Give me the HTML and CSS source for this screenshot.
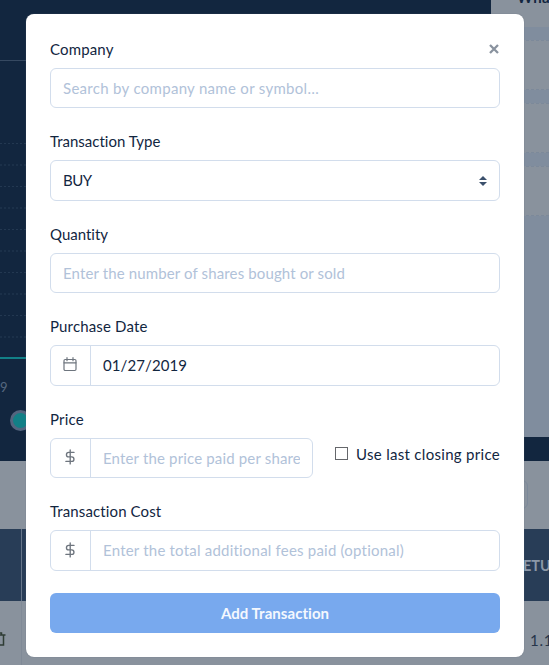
FILE: index.html
```html
<!DOCTYPE html>
<html lang="en">
<head>
<meta charset="utf-8">
<title>Add Transaction</title>
<link rel="stylesheet" href="styles.css">
</head>
<body>
<div class="page">
  <div class="top">
    <div class="chart">
      <div class="chart-head"></div>
      <div class="plot"></div>
      <div class="tick">9</div>
      <div class="dot"></div>
    </div>
    <div class="side">
      <div class="side-title">What</div>
      <div class="card"></div>
      <div class="card"></div>
      <div class="card"></div>
    </div>
  </div>
  <div class="toolbar"><div class="search"></div></div>
  <div class="thead"><div class="cell-first"></div><div class="th">ETUR</div></div>
  <div class="row">
    <div class="cell-first">
      <svg class="trash" width="14" height="16" viewBox="0 0 14 16" fill="none" stroke="#2f3d35" stroke-width="1.5"><path d="M1 4h12.5M5 4V2h4.5v2M3 4v10h8.5V4"/></svg>
    </div>
    <div class="td">1.1</div>
  </div>
</div>

<form class="modal">
  <svg class="close" width="10" height="10" viewBox="0 0 10 10" stroke="#89929e" stroke-width="2.3"><path d="M1 1l8 8M9 1L1 9"/></svg>
  <div class="group">
    <div class="label"><span class="t-company">Company</span></div>
    <div class="input hint"><span class="t-search">Search by company name or symbol…</span></div>
  </div>
  <div class="group">
    <div class="label"><span class="t-type">Transaction Type</span></div>
    <div class="input select"><span class="t-buy">BUY</span>
      <svg width="8" height="10" viewBox="0 0 8 10" fill="#3b506c"><path d="M0 4L4 0l4 4zM0 6h8l-4 4z"/></svg>
    </div>
  </div>
  <div class="group">
    <div class="label"><span>Quantity</span></div>
    <div class="input hint"><span class="t-number">Enter the number of shares bought or sold</span></div>
  </div>
  <div class="group">
    <div class="label"><span class="t-date">Purchase Date</span></div>
    <div class="input addon"><div class="icon">
      <svg width="15" height="15" viewBox="0 0 15 15" fill="none" stroke="#6e757e" stroke-width="1.2" stroke-linecap="round"><rect x="1" y="2.5" width="12" height="11" rx="1.2"/><path d="M1 5.8h12M4 .7v3M10 .7v3"/></svg>
    </div><div class="value"><span class="t-day">01/27/2019</span></div></div>
  </div>
  <div class="group price-row">
    <div class="price">
      <div class="label"><span class="t-price">Price</span></div>
      <div class="input addon hint"><div class="icon">
        <svg width="11" height="16" viewBox="0 0 11 16" fill="none" stroke="#6e757e" stroke-width="1.35" stroke-linecap="round"><path d="M5.2.9v14M9 3.4H3.7a2.2 2.2 0 0 0 0 4.5h3a2.2 2.2 0 0 1 0 4.5H.9"/></svg>
      </div><div class="value"><span class="t-paid">Enter the price paid per share</span></div></div>
    </div>
    <div class="check"><span class="box"></span><span class="t-closing">Use last closing price</span></div>
  </div>
  <div class="group">
    <div class="label"><span class="t-cost">Transaction Cost</span></div>
    <div class="input addon hint"><div class="icon">
      <svg width="11" height="16" viewBox="0 0 11 16" fill="none" stroke="#6e757e" stroke-width="1.35" stroke-linecap="round"><path d="M5.2.9v14M9 3.4H3.7a2.2 2.2 0 0 0 0 4.5h3a2.2 2.2 0 0 1 0 4.5H.9"/></svg>
    </div><div class="value"><span class="t-fees">Enter the total additional fees paid (optional)</span></div></div>
  </div>
  <div class="button"><span class="t-add">Add Transaction</span></div>
</form>
</body>
</html>
```
FILE: styles.css
```css
* { box-sizing: border-box; }
body { margin: 0; width: 549px; height: 665px; overflow: hidden; position: relative; font: 15px/22.5px Lato, "Liberation Sans", sans-serif; font-variant-ligatures: none; color: #12263f; }
.page { height: 665px; background: #89929d; overflow: hidden; }
.top { display: flex; height: 461px; background: #12263f; }
.chart { width: 491px; flex: none; }
.chart-head { height: 61px; border-bottom: 1px solid #364961; }
.plot {
  height: 298px; border-bottom: 2px solid #128087;
  background:
    repeating-linear-gradient(90deg, transparent 0 2px, #12263f 2px 4px) 0 0,
    repeating-linear-gradient(180deg, #233851 0 1px, transparent 1px 21px, #1b3049 21px 23px, transparent 23px 43px) 0 82px / 100% 210px no-repeat;
}
.tick { height: 51px; padding-top: 17px; font-size: 13px; color: #56687f; }
.dot { width: 21px; height: 21px; margin-left: 10px; border: 3px solid #53657f; border-radius: 50%; background: #128087; }
.side { width: 58px; height: 440px; margin-top: -3px; background: #808d9e; }
.side-title { height: 30px; padding-left: 26px; background: #89929d; font-weight: 700; line-height: 0; letter-spacing: .5px; margin-bottom: 13px; }
.card { height: 50px; margin-bottom: 13px; background: #89929d; border: 1px dashed #7c899a; border-width: 1px 0; }
.toolbar { height: 68px; padding: 19px 0 0 40px; }
.search { width: 488px; height: 29px; border: 1px solid #7c899a; border-radius: 6px; }
.thead { display: flex; height: 72px; background: #283d57; align-items: center; }
.cell-first { width: 22px; height: 100%; border-right: 1px solid #66768a; flex: none; }
.th { margin-left: 501px; font-weight: 700; font-size: 14.5px; color: #8b98a8; padding-top: 3px; }
.row { display: flex; height: 64px; align-items: flex-start; }
.row .cell-first { border-color: #808a97; padding-top: 30px; }
.trash { display: block; margin-left: -8px; }
.td { margin: 28px 0 0 508px; color: #26354a; letter-spacing: .8px; }

.modal { position: absolute; left: 26px; top: 14px; width: 498px; height: 643px; margin: 0; padding: 23.7px 24px; background: #fff; border-radius: 8px; box-shadow: 0 0 1px #5f6a78; }
.close { position: absolute; right: 25px; top: 29.5px; }
.group { height: 92.5px; }
.label { height: 22.5px; margin-bottom: 7.5px; white-space: nowrap; }
.input { display: flex; align-items: center; height: 40.5px; border: 1px solid #d2ddec; border-radius: 6px; padding: 0 12px; white-space: nowrap; }
.hint { color: #b1c2d9; }
.select { justify-content: space-between; }
.select svg { margin-top: 1px; }
.addon { padding: 0; }
.icon { width: 40px; height: 100%; flex: none; border-right: 1px solid #d2ddec; display: flex; align-items: center; justify-content: center; }
.icon svg { margin-top: -1px; }
.value { flex: 1; min-width: 0; margin: 0 12px; overflow: hidden; }
.price-row { display: flex; justify-content: space-between; }
.price { width: 263px; }
.check { display: flex; align-items: center; height: 22.5px; margin-top: 35px; white-space: nowrap; }
.box { width: 13px; height: 13px; border: 1px solid #65676b; margin-right: 8px; }
.button { height: 40px; margin-top: .3px; border-radius: 6px; background: #78a9ee; color: #f4f8fe; display: flex; align-items: center; justify-content: center; font-weight: 700; }

/* Per-text tracking */
.t-company { letter-spacing: .15px; }
.t-search { letter-spacing: .3px; }
.t-buy { letter-spacing: -.5px; }
.t-number { letter-spacing: .13px; }
.t-date { letter-spacing: .15px; }
.t-day { letter-spacing: .1px; }
.t-price { letter-spacing: .2px; }
.t-cost { letter-spacing: .12px; }
.t-paid { letter-spacing: .16px; }
.t-closing { letter-spacing: .3px; }
.t-fees { letter-spacing: .21px; }
.t-add { letter-spacing: .05px; }
```
